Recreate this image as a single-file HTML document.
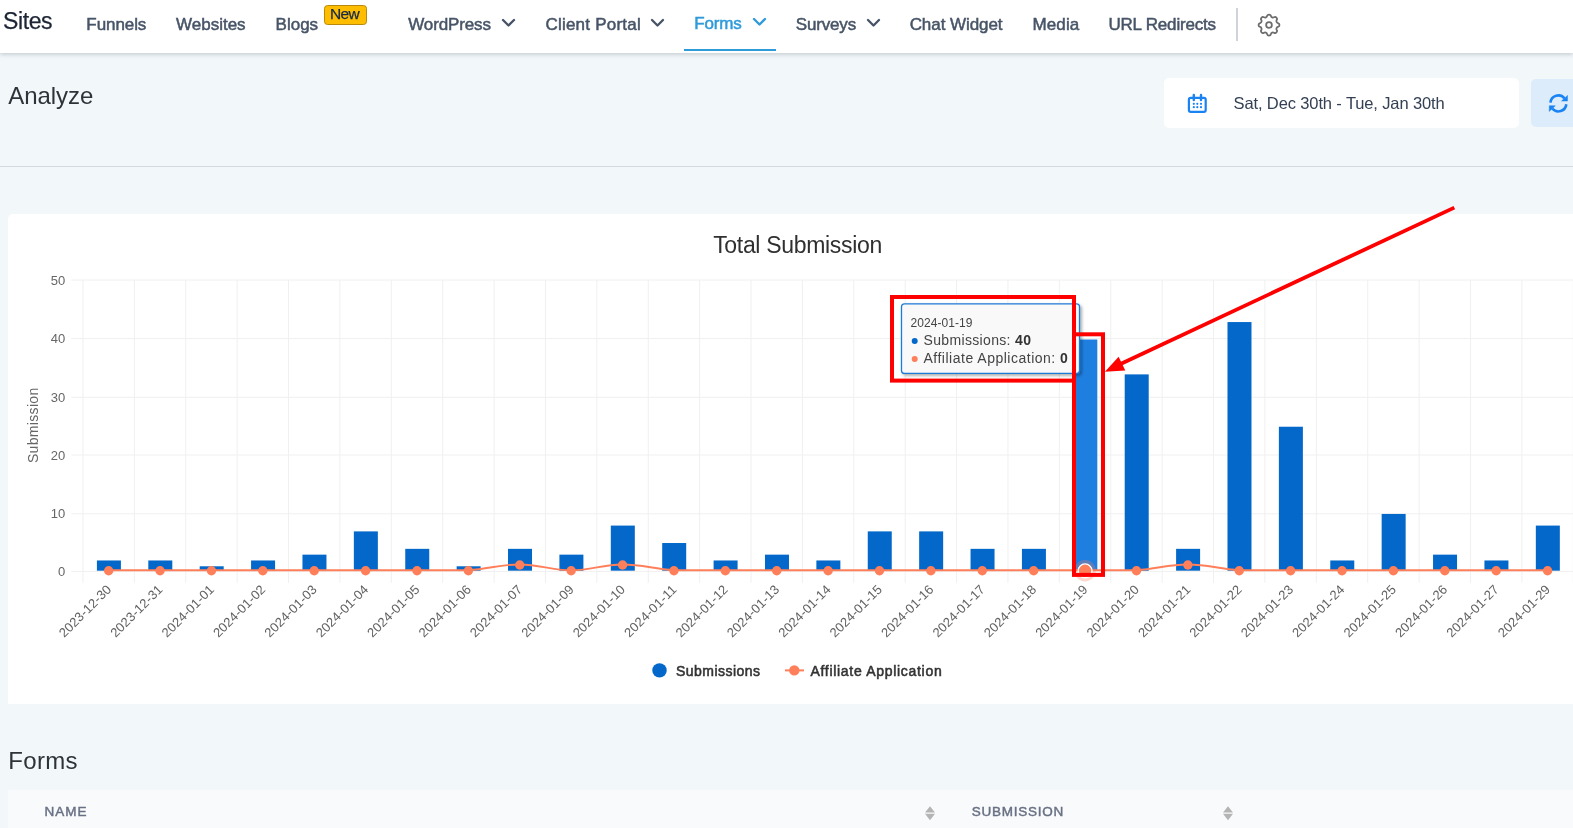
<!DOCTYPE html>
<html lang="en"><head><meta charset="utf-8"><title>Sites - Forms - Analyze</title>
<style>
html,body{margin:0;padding:0;overflow:hidden}
body{width:1573px;height:828px;overflow:hidden;position:relative;background:#f2f7fa;font-family:"Liberation Sans", Arial, sans-serif;}
.abs{position:absolute}
.t{position:absolute;white-space:nowrap;line-height:1;}
#nav{position:absolute;left:0;top:0;width:1573px;height:53px;background:#fff;box-shadow:0 1px 5px rgba(30,50,70,.27)}
#card{position:absolute;left:8px;top:214px;width:1580px;height:490px;background:#fff;border-radius:5px 5px 0 0}
#datebox{position:absolute;left:1164px;top:78px;width:355px;height:50px;background:#fff;border-radius:5px}
#refresh{position:absolute;left:1531px;top:79px;width:60px;height:48px;background:#dcecfa;border-radius:5px}
#hr{position:absolute;left:0;top:165.6px;width:1573px;height:1.2px;background:#d4dadf}
#thead{position:absolute;left:8px;top:790px;width:1580px;height:50px;background:#f8fafc}
#badge{position:absolute;left:324px;top:4.8px;width:43px;height:20px;background:#ffbd00;border:0.9px solid #b8890a;border-radius:3.5px;box-sizing:border-box}
</style></head><body>
<div id="root" style="position:absolute;left:0;top:0;width:1573px;height:828px;overflow:hidden;will-change:transform">
<div id="nav"></div>
<div id="badge"></div>
<div class="abs" style="left:684.2px;top:49px;width:92px;height:2px;background:#2f9ada"></div>
<div class="abs" style="left:1236px;top:8px;width:2px;height:33px;background:#d0d3da"></div>
<div id="hr"></div>
<div id="datebox"></div>
<div id="refresh"></div>
<div id="card"></div>
<div id="thead"></div>
<span class="t" id="t_sites" style="left:2.90px;top:9.83px;font-size:23px;color:#1c2534;letter-spacing:-0.350px;-webkit-text-stroke:0.25px #1c2534;">Sites</span><span class="t" id="t_funnels" style="left:86.35px;top:15.61px;font-size:17px;color:#475467;letter-spacing:-0.083px;-webkit-text-stroke:0.5px #475467;">Funnels</span><span class="t" id="t_websites" style="left:176.00px;top:15.61px;font-size:17px;color:#475467;letter-spacing:0.000px;-webkit-text-stroke:0.5px #475467;">Websites</span><span class="t" id="t_blogs" style="left:275.60px;top:15.61px;font-size:17px;color:#475467;letter-spacing:0.000px;-webkit-text-stroke:0.5px #475467;">Blogs</span><span class="t" id="t_wp" style="left:408.20px;top:15.61px;font-size:17px;color:#475467;letter-spacing:-0.125px;-webkit-text-stroke:0.5px #475467;">WordPress</span><span class="t" id="t_cp" style="left:545.40px;top:15.61px;font-size:17px;color:#475467;letter-spacing:0.234px;-webkit-text-stroke:0.5px #475467;">Client Portal</span><span class="t" id="t_forms" style="left:694.20px;top:15.11px;font-size:17px;color:#2f9ada;letter-spacing:-0.150px;-webkit-text-stroke:0.5px #2f9ada;">Forms</span><span class="t" id="t_surveys" style="left:795.80px;top:15.61px;font-size:17px;color:#475467;letter-spacing:-0.167px;-webkit-text-stroke:0.5px #475467;">Surveys</span><span class="t" id="t_chat" style="left:909.65px;top:15.61px;font-size:17px;color:#475467;letter-spacing:-0.060px;-webkit-text-stroke:0.5px #475467;">Chat Widget</span><span class="t" id="t_media" style="left:1032.50px;top:15.61px;font-size:17px;color:#475467;letter-spacing:0.125px;-webkit-text-stroke:0.5px #475467;">Media</span><span class="t" id="t_url" style="left:1108.40px;top:15.61px;font-size:17px;color:#475467;letter-spacing:-0.183px;-webkit-text-stroke:0.5px #475467;">URL Redirects</span><span class="t" id="t_analyze" style="left:8.35px;top:83.68px;font-size:24px;color:#2d3439;letter-spacing:-0.067px;">Analyze</span><span class="t" id="t_date" style="left:1233.55px;top:95.23px;font-size:16.5px;color:#344054;letter-spacing:-0.125px;">Sat, Dec 30th - Tue, Jan 30th</span><span class="t" id="t_formsh" style="left:8.30px;top:749.08px;font-size:24px;color:#2d3439;letter-spacing:0.300px;">Forms</span><span class="t" id="t_name" style="left:44.50px;top:805.47px;font-size:13.5px;color:#687083;letter-spacing:1.000px;-webkit-text-stroke:0.45px #687083;">NAME</span><span class="t" id="t_subm" style="left:971.75px;top:805.47px;font-size:13.5px;color:#687083;letter-spacing:0.750px;-webkit-text-stroke:0.45px #687083;">SUBMISSION</span><span class="t" id="t_new" style="left:330.10px;top:6.48px;font-size:15.5px;color:#13294a;letter-spacing:-0.700px;-webkit-text-stroke:0.25px #13294a;">New</span>
<svg class="abs" style="left:500.20px;top:17.32px" width="17.0" height="11.5" viewBox="0 0 17.0 11.5"><path d="M3 3L8.5 8.5L14.0 3" fill="none" stroke="#475467" stroke-width="2.35" stroke-linecap="round" stroke-linejoin="round"/></svg>
<svg class="abs" style="left:649.40px;top:17.32px" width="17.0" height="11.5" viewBox="0 0 17.0 11.5"><path d="M3 3L8.5 8.5L14.0 3" fill="none" stroke="#475467" stroke-width="2.35" stroke-linecap="round" stroke-linejoin="round"/></svg>
<svg class="abs" style="left:750.90px;top:16.32px" width="17.0" height="11.5" viewBox="0 0 17.0 11.5"><path d="M3 3L8.5 8.5L14.0 3" fill="none" stroke="#2f9ada" stroke-width="2.35" stroke-linecap="round" stroke-linejoin="round"/></svg>
<svg class="abs" style="left:865.40px;top:17.32px" width="17.0" height="11.5" viewBox="0 0 17.0 11.5"><path d="M3 3L8.5 8.5L14.0 3" fill="none" stroke="#475467" stroke-width="2.35" stroke-linecap="round" stroke-linejoin="round"/></svg>
<svg class="abs" style="left:1254.6px;top:10.8px" width="28" height="28" viewBox="0 0 24 24" fill="none" stroke="#6c6c6c" stroke-width="1.5" stroke-linecap="round" stroke-linejoin="round"><path d="M10.325 4.317c.426-1.756 2.924-1.756 3.35 0a1.724 1.724 0 002.573 1.066c1.543-.94 3.31.826 2.37 2.37a1.724 1.724 0 001.065 2.572c1.756.426 1.756 2.924 0 3.35a1.724 1.724 0 00-1.066 2.573c.94 1.543-.826 3.31-2.37 2.37a1.724 1.724 0 00-2.572 1.065c-.426 1.756-2.924 1.756-3.35 0a1.724 1.724 0 00-2.573-1.066c-1.543.94-3.31-.826-2.37-2.37a1.724 1.724 0 00-1.065-2.572c-1.756-.426-1.756-2.924 0-3.35a1.724 1.724 0 001.066-2.573c-.94-1.543.826-3.31 2.37-2.37.996.608 2.296.07 2.572-1.065z"/><circle cx="12" cy="12" r="2.45"/></svg>
<svg class="abs" style="left:1186px;top:92px" width="24" height="24" viewBox="0 0 24 24"><rect x="2.9" y="5.8" width="16.8" height="14" rx="1.8" fill="none" stroke="#1a83f3" stroke-width="2.2"/><path d="M7.8 2.9v5.2M15 2.9v5.2" stroke="#1a83f3" stroke-width="2.4" stroke-linecap="round"/><g fill="#1a83f3"><circle cx="7.8" cy="11.8" r="1.1"/><circle cx="11.3" cy="11.8" r="1.1"/><circle cx="15" cy="11.8" r="1.1"/><circle cx="7.8" cy="15.2" r="1.1"/><circle cx="11.3" cy="15.2" r="1.1"/><circle cx="15" cy="15.2" r="1.1"/></g></svg>
<svg class="abs" style="left:1546.6px;top:91.5px" width="22.8" height="22.8" viewBox="-12 -12 24 24"><path d="M-8.35 -0.9A8.35 8.35 0 0 1 6.4 -5.35M8.35 0.9A8.35 8.35 0 0 1 -6.4 5.35" fill="none" stroke="#1a83f3" stroke-width="2.7"/><path d="M9.6 -8.4V-2.5H3.3zM-9.6 8.4V2.5H-3.3z" fill="#1a83f3" stroke="#1a83f3" stroke-width="0.5" stroke-linejoin="round"/></svg>
<svg class="abs" style="left:923.3px;top:804px" width="14" height="18" viewBox="0 0 14 18"><path d="M7 2.2L12 8.6H2zM7 16.2L12 9.8H2z" fill="#b4b4b4"/></svg>
<svg class="abs" style="left:1221.4px;top:804px" width="14" height="18" viewBox="0 0 14 18"><path d="M7 2.2L12 8.6H2zM7 16.2L12 9.8H2z" fill="#b4b4b4"/></svg>
<svg class="abs" style="left:0;top:0" width="1573" height="828" viewBox="0 0 1573 828" font-family="Liberation Sans, Arial, sans-serif"><path d="M71.3 280.00H1573 M71.3 338.50H1573 M71.3 397.30H1573 M71.3 455.00H1573 M71.3 513.80H1573 M71.3 571.40H1573 M82.96 280.00V582.8 M134.35 280.00V582.8 M185.74 280.00V582.8 M237.13 280.00V582.8 M288.52 280.00V582.8 M339.91 280.00V582.8 M391.30 280.00V582.8 M442.69 280.00V582.8 M494.08 280.00V582.8 M545.47 280.00V582.8 M596.86 280.00V582.8 M648.25 280.00V582.8 M699.64 280.00V582.8 M751.03 280.00V582.8 M802.42 280.00V582.8 M853.81 280.00V582.8 M905.20 280.00V582.8 M956.59 280.00V582.8 M1007.98 280.00V582.8 M1059.37 280.00V582.8 M1110.76 280.00V582.8 M1162.15 280.00V582.8 M1213.54 280.00V582.8 M1264.93 280.00V582.8 M1316.32 280.00V582.8 M1367.71 280.00V582.8 M1419.10 280.00V582.8 M1470.49 280.00V582.8 M1521.88 280.00V582.8 M1573.27 280.00V582.8" stroke="#f0f0f0" stroke-width="1" fill="none"/><rect x="96.91" y="560.47" width="24" height="10.23" fill="#0368c9"/><rect x="148.30" y="560.47" width="24" height="10.23" fill="#0368c9"/><rect x="199.69" y="566.28" width="24" height="4.42" fill="#0368c9"/><rect x="251.07" y="560.47" width="24" height="10.23" fill="#0368c9"/><rect x="302.46" y="554.65" width="24" height="16.05" fill="#0368c9"/><rect x="353.85" y="531.39" width="24" height="39.31" fill="#0368c9"/><rect x="405.25" y="548.84" width="24" height="21.86" fill="#0368c9"/><rect x="456.63" y="566.28" width="24" height="4.42" fill="#0368c9"/><rect x="508.02" y="548.84" width="24" height="21.86" fill="#0368c9"/><rect x="559.41" y="554.65" width="24" height="16.05" fill="#0368c9"/><rect x="610.81" y="525.58" width="24" height="45.12" fill="#0368c9"/><rect x="662.20" y="543.02" width="24" height="27.68" fill="#0368c9"/><rect x="713.59" y="560.47" width="24" height="10.23" fill="#0368c9"/><rect x="764.98" y="554.65" width="24" height="16.05" fill="#0368c9"/><rect x="816.37" y="560.47" width="24" height="10.23" fill="#0368c9"/><rect x="867.75" y="531.39" width="24" height="39.31" fill="#0368c9"/><rect x="919.15" y="531.39" width="24" height="39.31" fill="#0368c9"/><rect x="970.54" y="548.84" width="24" height="21.86" fill="#0368c9"/><rect x="1021.92" y="548.84" width="24" height="21.86" fill="#0368c9"/><rect x="1073.32" y="339.50" width="24" height="231.20" fill="#1f7fe0"/><rect x="1124.71" y="374.39" width="24" height="196.31" fill="#0368c9"/><rect x="1176.10" y="548.84" width="24" height="21.86" fill="#0368c9"/><rect x="1227.49" y="322.06" width="24" height="248.65" fill="#0368c9"/><rect x="1278.88" y="426.73" width="24" height="143.98" fill="#0368c9"/><rect x="1330.27" y="560.47" width="24" height="10.23" fill="#0368c9"/><rect x="1381.65" y="513.95" width="24" height="56.75" fill="#0368c9"/><rect x="1433.05" y="554.65" width="24" height="16.05" fill="#0368c9"/><rect x="1484.43" y="560.47" width="24" height="10.23" fill="#0368c9"/><rect x="1535.83" y="525.58" width="24" height="45.12" fill="#0368c9"/><path d="M108.66 570.25 C129.21 570.25 139.49 570.25 160.05 570.25 C180.60 570.25 190.88 570.25 211.44 570.25 C231.99 570.25 242.27 570.25 262.82 570.25 C283.38 570.25 293.66 570.25 314.21 570.25 C334.77 570.25 345.05 570.25 365.60 570.25 C386.16 570.25 396.44 570.25 417.00 570.25 C437.55 570.25 447.89 570.25 468.38 570.25 C489.01 569.08 499.22 564.43 519.77 564.43 C540.33 564.43 550.61 570.25 571.16 570.25 C591.72 570.25 602.00 564.43 622.56 564.43 C643.11 564.43 653.32 569.08 673.95 570.25 C694.44 570.25 704.78 570.25 725.34 570.25 C745.89 570.25 756.17 570.25 776.73 570.25 C797.28 570.25 807.56 570.25 828.12 570.25 C848.67 570.25 858.95 570.25 879.50 570.25 C900.06 570.25 910.34 570.25 930.90 570.25 C951.45 570.25 961.73 570.25 982.29 570.25 C1002.84 570.25 1013.12 570.25 1033.67 570.25 C1054.23 570.25 1064.51 570.25 1085.07 570.25 C1105.62 570.25 1115.96 570.25 1136.46 570.25 C1157.08 569.08 1167.29 564.43 1187.85 564.43 C1208.40 564.43 1218.61 569.08 1239.24 570.25 C1259.73 570.25 1270.07 570.25 1290.62 570.25 C1311.18 570.25 1321.46 570.25 1342.02 570.25 C1362.57 570.25 1372.85 570.25 1393.40 570.25 C1413.96 570.25 1424.24 570.25 1444.80 570.25 C1465.35 570.25 1475.63 570.25 1496.18 570.25 C1516.74 570.25 1527.02 570.25 1547.58 570.25" stroke="#ff7f5a" stroke-width="1.9" fill="none"/><circle cx="108.66" cy="570.80" r="4.7" fill="#ff7f5a"/><circle cx="160.05" cy="570.80" r="4.7" fill="#ff7f5a"/><circle cx="211.44" cy="570.80" r="4.7" fill="#ff7f5a"/><circle cx="262.82" cy="570.80" r="4.7" fill="#ff7f5a"/><circle cx="314.21" cy="570.80" r="4.7" fill="#ff7f5a"/><circle cx="365.60" cy="570.80" r="4.7" fill="#ff7f5a"/><circle cx="417.00" cy="570.80" r="4.7" fill="#ff7f5a"/><circle cx="468.38" cy="570.80" r="4.7" fill="#ff7f5a"/><circle cx="519.77" cy="564.98" r="4.7" fill="#ff7f5a"/><circle cx="571.16" cy="570.80" r="4.7" fill="#ff7f5a"/><circle cx="622.56" cy="564.98" r="4.7" fill="#ff7f5a"/><circle cx="673.95" cy="570.80" r="4.7" fill="#ff7f5a"/><circle cx="725.34" cy="570.80" r="4.7" fill="#ff7f5a"/><circle cx="776.73" cy="570.80" r="4.7" fill="#ff7f5a"/><circle cx="828.12" cy="570.80" r="4.7" fill="#ff7f5a"/><circle cx="879.50" cy="570.80" r="4.7" fill="#ff7f5a"/><circle cx="930.90" cy="570.80" r="4.7" fill="#ff7f5a"/><circle cx="982.29" cy="570.80" r="4.7" fill="#ff7f5a"/><circle cx="1033.67" cy="570.80" r="4.7" fill="#ff7f5a"/><circle cx="1085.07" cy="570.80" r="10.7" fill="#ff7f5a" fill-opacity="0.3"/><circle cx="1085.07" cy="570.80" r="6.9" fill="#ff7f5a" stroke="#fff" stroke-width="1.4"/><circle cx="1136.46" cy="570.80" r="4.7" fill="#ff7f5a"/><circle cx="1187.85" cy="564.98" r="4.7" fill="#ff7f5a"/><circle cx="1239.24" cy="570.80" r="4.7" fill="#ff7f5a"/><circle cx="1290.62" cy="570.80" r="4.7" fill="#ff7f5a"/><circle cx="1342.02" cy="570.80" r="4.7" fill="#ff7f5a"/><circle cx="1393.40" cy="570.80" r="4.7" fill="#ff7f5a"/><circle cx="1444.80" cy="570.80" r="4.7" fill="#ff7f5a"/><circle cx="1496.18" cy="570.80" r="4.7" fill="#ff7f5a"/><circle cx="1547.58" cy="570.80" r="4.7" fill="#ff7f5a"/><text x="65.3" y="284.60" font-size="13" fill="#666" text-anchor="end">50</text><text x="65.3" y="343.10" font-size="13" fill="#666" text-anchor="end">40</text><text x="65.3" y="401.90" font-size="13" fill="#666" text-anchor="end">30</text><text x="65.3" y="459.60" font-size="13" fill="#666" text-anchor="end">20</text><text x="65.3" y="518.40" font-size="13" fill="#666" text-anchor="end">10</text><text x="65.3" y="576.00" font-size="13" fill="#666" text-anchor="end">0</text><text transform="translate(38.2 425.4) rotate(-90)" font-size="14" fill="#666" text-anchor="middle" id="s_ytitle" textLength="75.3" lengthAdjust="spacing">Submission</text><text transform="translate(112.06 590.3) rotate(-45)" font-size="13" fill="#626262" text-anchor="end" textLength="67.6" lengthAdjust="spacing">2023-12-30</text><text transform="translate(163.45 590.3) rotate(-45)" font-size="13" fill="#626262" text-anchor="end" textLength="67.6" lengthAdjust="spacing">2023-12-31</text><text transform="translate(214.84 590.3) rotate(-45)" font-size="13" fill="#626262" text-anchor="end" textLength="67.6" lengthAdjust="spacing">2024-01-01</text><text transform="translate(266.22 590.3) rotate(-45)" font-size="13" fill="#626262" text-anchor="end" textLength="67.6" lengthAdjust="spacing">2024-01-02</text><text transform="translate(317.61 590.3) rotate(-45)" font-size="13" fill="#626262" text-anchor="end" textLength="67.6" lengthAdjust="spacing">2024-01-03</text><text transform="translate(369.00 590.3) rotate(-45)" font-size="13" fill="#626262" text-anchor="end" textLength="67.6" lengthAdjust="spacing">2024-01-04</text><text transform="translate(420.39 590.3) rotate(-45)" font-size="13" fill="#626262" text-anchor="end" textLength="67.6" lengthAdjust="spacing">2024-01-05</text><text transform="translate(471.78 590.3) rotate(-45)" font-size="13" fill="#626262" text-anchor="end" textLength="67.6" lengthAdjust="spacing">2024-01-06</text><text transform="translate(523.17 590.3) rotate(-45)" font-size="13" fill="#626262" text-anchor="end" textLength="67.6" lengthAdjust="spacing">2024-01-07</text><text transform="translate(574.56 590.3) rotate(-45)" font-size="13" fill="#626262" text-anchor="end" textLength="67.6" lengthAdjust="spacing">2024-01-09</text><text transform="translate(625.96 590.3) rotate(-45)" font-size="13" fill="#626262" text-anchor="end" textLength="67.6" lengthAdjust="spacing">2024-01-10</text><text transform="translate(677.35 590.3) rotate(-45)" font-size="13" fill="#626262" text-anchor="end" textLength="67.6" lengthAdjust="spacing">2024-01-11</text><text transform="translate(728.74 590.3) rotate(-45)" font-size="13" fill="#626262" text-anchor="end" textLength="67.6" lengthAdjust="spacing">2024-01-12</text><text transform="translate(780.12 590.3) rotate(-45)" font-size="13" fill="#626262" text-anchor="end" textLength="67.6" lengthAdjust="spacing">2024-01-13</text><text transform="translate(831.51 590.3) rotate(-45)" font-size="13" fill="#626262" text-anchor="end" textLength="67.6" lengthAdjust="spacing">2024-01-14</text><text transform="translate(882.90 590.3) rotate(-45)" font-size="13" fill="#626262" text-anchor="end" textLength="67.6" lengthAdjust="spacing">2024-01-15</text><text transform="translate(934.30 590.3) rotate(-45)" font-size="13" fill="#626262" text-anchor="end" textLength="67.6" lengthAdjust="spacing">2024-01-16</text><text transform="translate(985.69 590.3) rotate(-45)" font-size="13" fill="#626262" text-anchor="end" textLength="67.6" lengthAdjust="spacing">2024-01-17</text><text transform="translate(1037.08 590.3) rotate(-45)" font-size="13" fill="#626262" text-anchor="end" textLength="67.6" lengthAdjust="spacing">2024-01-18</text><text transform="translate(1088.47 590.3) rotate(-45)" font-size="13" fill="#626262" text-anchor="end" textLength="67.6" lengthAdjust="spacing">2024-01-19</text><text transform="translate(1139.86 590.3) rotate(-45)" font-size="13" fill="#626262" text-anchor="end" textLength="67.6" lengthAdjust="spacing">2024-01-20</text><text transform="translate(1191.25 590.3) rotate(-45)" font-size="13" fill="#626262" text-anchor="end" textLength="67.6" lengthAdjust="spacing">2024-01-21</text><text transform="translate(1242.64 590.3) rotate(-45)" font-size="13" fill="#626262" text-anchor="end" textLength="67.6" lengthAdjust="spacing">2024-01-22</text><text transform="translate(1294.03 590.3) rotate(-45)" font-size="13" fill="#626262" text-anchor="end" textLength="67.6" lengthAdjust="spacing">2024-01-23</text><text transform="translate(1345.42 590.3) rotate(-45)" font-size="13" fill="#626262" text-anchor="end" textLength="67.6" lengthAdjust="spacing">2024-01-24</text><text transform="translate(1396.81 590.3) rotate(-45)" font-size="13" fill="#626262" text-anchor="end" textLength="67.6" lengthAdjust="spacing">2024-01-25</text><text transform="translate(1448.20 590.3) rotate(-45)" font-size="13" fill="#626262" text-anchor="end" textLength="67.6" lengthAdjust="spacing">2024-01-26</text><text transform="translate(1499.59 590.3) rotate(-45)" font-size="13" fill="#626262" text-anchor="end" textLength="67.6" lengthAdjust="spacing">2024-01-27</text><text transform="translate(1550.98 590.3) rotate(-45)" font-size="13" fill="#626262" text-anchor="end" textLength="67.6" lengthAdjust="spacing">2024-01-29</text><text x="797.7" y="253.1" font-size="23" fill="#303030" text-anchor="middle" textLength="169" lengthAdjust="spacing">Total Submission</text><circle cx="659.5" cy="670.4" r="7.2" fill="#0368c9"/><text x="676" y="676" font-size="14" fill="#333" stroke="#333" stroke-width="0.55" textLength="84" lengthAdjust="spacing">Submissions</text><path d="M785 670.4H804" stroke="#ff7f5a" stroke-width="2"/><circle cx="794.3" cy="670.4" r="5.2" fill="#ff7f5a"/><text x="810.5" y="676" font-size="14" fill="#333" stroke="#333" stroke-width="0.55" textLength="131.2" lengthAdjust="spacing">Affiliate Application</text><defs><filter id="sh" x="-10%" y="-10%" width="125%" height="135%"><feDropShadow dx="1.8" dy="1.8" stdDeviation="1.8" flood-color="#000" flood-opacity="0.33"/></filter></defs><rect x="901.5" y="303.8" width="178" height="69.6" rx="3" fill="#f9f9f9" stroke="#1e7bd8" stroke-width="1.3" filter="url(#sh)"/><text x="910.5" y="326.7" font-size="12" fill="#444" textLength="62" lengthAdjust="spacing">2024-01-19</text><circle cx="914.7" cy="341" r="3" fill="#0368c9"/><circle cx="914.7" cy="358.9" r="3" fill="#ff7f5a"/><text x="923.5" y="344.8" font-size="14" fill="#444" textLength="107.5" lengthAdjust="spacing">Submissions: <tspan font-weight="700" fill="#333">40</tspan></text><text x="923.5" y="363" font-size="14" fill="#444" textLength="144.4" lengthAdjust="spacing">Affiliate Application: <tspan font-weight="700" fill="#333">0</tspan></text><rect x="892" y="297" width="182" height="83.6" fill="none" stroke="#fe0000" stroke-width="4"/><rect x="1074" y="334.3" width="29" height="240.6" fill="none" stroke="#fe0000" stroke-width="4"/><path d="M1454.3 207.6L1120 364.2" stroke="#fe0000" stroke-width="3.8" fill="none"/><path d="M1104.9 371.7L1118.6 356.7L1125.3 370.4Z" fill="#fe0000"/></svg>
</div>
</body></html>
